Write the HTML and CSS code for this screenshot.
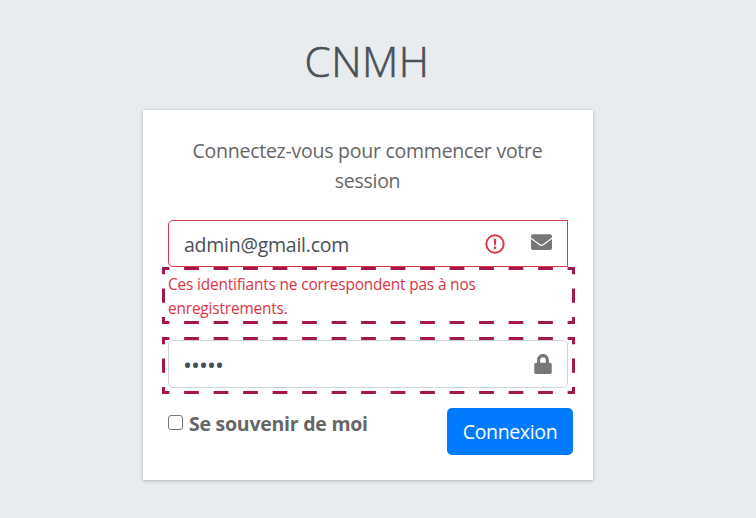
FILE: index.html
```html
<!DOCTYPE html>
<html lang="fr">
<head>
<meta charset="utf-8">
<title>CNMH</title>
<link rel="stylesheet" href="styles.css">
</head>
<body>
<main class="login">
  <h1 class="logo"><span>CNMH</span></h1>
  <form class="card">
    <p class="intro">Connectez-vous pour commencer votre<br>session</p>
    <div class="field invalid">
      <span class="value">admin@gmail.com</span>
      <svg class="alert" viewBox="0 0 20 20"><circle cx="10" cy="10" r="8.7" fill="none" stroke="#dc3545" stroke-width="1.9"/><path d="M8.7 4.8h2.6l-.5 6.5H9.2z" fill="#dc3545"/><circle cx="10" cy="13.9" r="1.3" fill="#dc3545"/></svg>
      <svg class="mail" viewBox="0 0 512 384"><path fill="#777" d="M502 127c4-3 10 0 10 5v204c0 26-22 48-48 48H48c-26 0-48-22-48-48V132c0-5 6-8 10-5 22 17 52 40 154 114 21 15 57 48 92 48 35 0 71-33 92-48 102-74 132-97 154-114zM256 256c23 0 56-29 73-41C463 118 473 109 503 86c6-5 9-12 9-19V48c0-26-22-48-48-48H48C22 0 0 22 0 48v19c0 7 3 14 9 19 30 23 40 32 174 129 17 12 50 41 73 41z"/></svg>
    </div>
    <div class="marked error">
      <svg class="dashes" viewBox="0 0 413 57"><path class="h" d="M0 1.5H413M0 55.5H413"/><path class="v" d="M1.5 0V57M411.5 0V57"/></svg>
      Ces identifiants ne correspondent pas à nos<br>enregistrements.
    </div>
    <div class="marked secret">
      <svg class="dashes" viewBox="0 0 413 57"><path class="h" d="M0 1.5H413M0 55.5H413"/><path class="v" d="M1.5 0V57M411.5 0V57"/></svg>
      <div class="field password">
        <span class="value dots">•••••</span>
        <svg class="lock" viewBox="0 0 448 512"><path fill="#777" d="M400 224h-24v-72C376 68 308 0 224 0S72 68 72 152v72H48c-26 0-48 22-48 48v192c0 26 22 48 48 48h352c26 0 48-22 48-48V272c0-26-22-48-48-48zm-104 0H152v-72c0-40 32-72 72-72s72 32 72 72v72z"/></svg>
      </div>
    </div>
    <div class="actions">
      <label class="remember"><span class="box"></span><span>Se souvenir de moi</span></label>
      <button class="submit" type="button">Connexion</button>
    </div>
  </form>
</main>
</body>
</html>
```
FILE: styles.css
```css
* { box-sizing: border-box; }
body {
  margin: 0;
  height: 518px;
  overflow: hidden;
  background: #e9ecef;
  color: #495057;
  font: 19.5px/30px "Open Sans", "Noto Sans", sans-serif;
  letter-spacing: -.25px;
}
.login { width: 450px; margin-left: 143px; padding-top: 29px; }
.logo {
  margin: 0 0 18px;
  padding-right: 2px;
  height: 63px;
  font-size: 42px;
  font-weight: 300;
  -webkit-text-stroke: .6px #495057;
  letter-spacing: .5px;
  line-height: 63px;
  text-align: center;
}
.card {
  height: 370px;
  padding: 26px 25px 24px;
  background: #fff;
  box-shadow: 0 0 1px rgba(0, 0, 0, .13), 0 1px 4px rgba(0, 0, 0, .22);
}
.intro { margin: 0 -10px 24px; padding-right: 1px; color: #666; text-align: center; white-space: nowrap; }
.field {
  display: flex;
  align-items: center;
  width: 400px;
  height: 47px;
  padding: 0 15px;
  border: 1px solid #ced4da;
  border-radius: 5px;
  background: #fff;
}
.invalid { border-color: #dc3545; border-radius: 5px 0 0 5px; }
.value { flex: 1; padding-top: 3px; white-space: nowrap; }
.alert { width: 20px; height: 20px; margin-right: 26px; }
.mail { width: 21px; height: 16px; margin-top: -3px; }
.lock { width: 18px; height: 20px; }
.marked { position: relative; width: 413px; height: 57px; margin-left: -6px; }
.dashes { position: absolute; left: 0; top: 0; width: 413px; height: 57px; }
.dashes path { fill: none; stroke: #a5174b; stroke-width: 3; }
.dashes .h { stroke-dasharray: 14.75; stroke-dashoffset: 7.375; }
.dashes .v { stroke-dasharray: 14.25; stroke-dashoffset: 7.125; }
.error {
  padding: 6px 6px 4px;
  color: #dc3545;
  font-size: 15.4px;
  line-height: 24px;
  letter-spacing: -.16px;
  white-space: nowrap;
}
.secret { margin-top: 13px; padding: 3px 6px; }
.password { height: 48px; }
.dots { padding-top: 1px; font-size: 24px; letter-spacing: -1.05px; text-indent: -1px; }
.actions {
  display: flex;
  justify-content: space-between;
  width: 405px;
  margin-top: 14px;
}
.remember {
  display: flex;
  height: 32px;
  align-items: center;
  color: #666;
  font-weight: 700;
  white-space: nowrap;
}
.box {
  width: 15px;
  height: 15px;
  margin: -3px 6px 0 0;
  border: 1px solid #767676;
  border-radius: 3px;
}
.submit {
  width: 126px;
  height: 47px;
  padding: 0;
  border: 0;
  border-radius: 5px;
  background: #007bff;
  color: #fff;
  font: inherit;
  letter-spacing: -.35px;
}
```
